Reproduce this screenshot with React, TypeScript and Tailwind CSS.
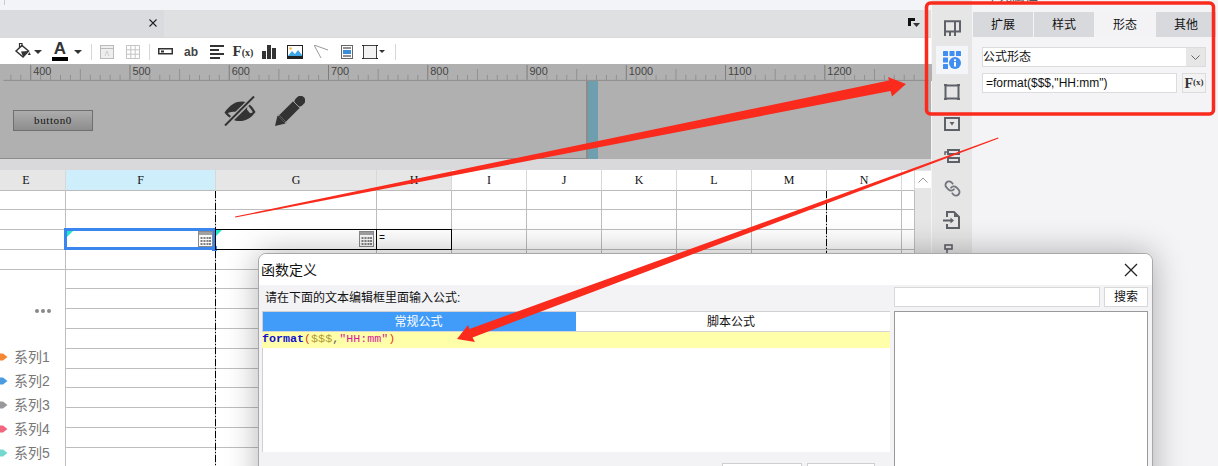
import type { ReactNode } from "react";
import { Link } from "lucide-react";

const columns = [
  { name: "E", width: "w-[66px]", head: "bg-[#e6e6e6] pr-[13px]" },
  { name: "F", width: "w-[150px]", head: "bg-[#cfeefb]" },
  { name: "G", width: "w-[161px]", head: "bg-[#e6e6e6]" },
  { name: "H", width: "w-[75px]", head: "bg-[#e6e6e6]" },
  { name: "I", width: "w-[75px]", head: "bg-white" },
  { name: "J", width: "w-[75px]", head: "bg-white" },
  { name: "K", width: "w-[75px]", head: "bg-white" },
  { name: "L", width: "w-[75px]", head: "bg-white" },
  { name: "M", width: "w-[75px]", head: "bg-white" },
  { name: "N", width: "w-[75px]", head: "bg-white" },
  { name: "", width: "flex-1", head: "bg-white" },
];

const rowHeights = [
  "h-[19px]", "h-[20px]", "h-[20px]", "h-[20px]", "h-[19px]", "h-[20px]", "h-[20px]",
  "h-[20px]", "h-[20px]", "h-[19px]", "h-[20px]", "h-[20px]", "h-[20px]", "h-[20px]",
];

const legend = [
  { name: "系列1", color: "#f58634" },
  { name: "系列2", color: "#4a9be0" },
  { name: "系列3", color: "#999999" },
  { name: "系列4", color: "#f2657f" },
  { name: "系列5", color: "#74d8cf" },
];

const rulerLabels = [400, 500, 600, 700, 800, 900, 1000, 1100, 1200];

function Calendar() {
  return (
    <svg width="15" height="16" viewBox="0 0 15 16" className="absolute right-[2px] bottom-[2px]">
      <rect x="0.5" y="0.5" width="14" height="15" fill="#fafafa" stroke="#8a8a8a" />
      <rect x="1" y="1" width="13" height="3" fill="#a0a0a0" />
      {[6, 9, 12].map((y) =>
        [2.5, 5.5, 8.5, 11].map((x) => <rect key={`${x}-${y}`} x={x} y={y} width="2" height="2" fill="#808080" />)
      )}
    </svg>
  );
}

function Corner({ className }: { className: string }) {
  return <div className={`absolute w-0 h-0 border-t-[6px] border-t-[#22e6c4] border-r-[6px] border-r-transparent ${className}`} />;
}

function Slot({ children }: { children: ReactNode }) {
  return <div className="w-[26px] h-[26px] flex items-center justify-center shrink-0">{children}</div>;
}

function Caret({ className }: { className: string }) {
  return <div className={`w-0 h-0 border-x-[4px] border-x-transparent border-t-[4px] border-t-[#333] ${className}`} />;
}

function Sep({ className }: { className: string }) {
  return <div className={`w-px h-[16px] bg-[#d8d8d8] shrink-0 ${className}`} />;
}

function Toolbar() {
  return (
    <div className="h-[26px] bg-white flex items-center pt-[2px]">
      <svg width="17" height="20" viewBox="0 0 17 20" className="ml-[14px] shrink-0">
        <path d="M2 9 L8 3.5 L14.5 9 L9 15 Z" fill="#fff" stroke="#333" strokeWidth="1.5" />
        <path d="M5.5 6 V1.5 H8 V5" fill="none" stroke="#333" strokeWidth="1.2" />
        <path d="M7 9.5 L14.5 9 L9 15 Z" fill="#333" />
        <path d="M15.3 10 L16.8 13 H13.8 Z" fill="#333" />
      </svg>
      <Caret className="ml-[3px] mt-[1px]" />
      <div className="ml-[10px] w-[16px] flex flex-col items-center shrink-0">
        <span className="text-[17px] leading-[14px] font-bold text-[#333]">A</span>
        <div className="w-[16px] h-[4px] bg-black mt-[1px]" />
      </div>
      <Caret className="ml-[6px] mt-[1px]" />
      <Sep className="ml-[9px]" />
      <div className="ml-[2px]" />
      <Slot>
        <svg width="14" height="14" viewBox="0 0 14 14">
          <rect x="0.5" y="0.5" width="13" height="13" fill="#eee" stroke="#bbb" />
          <path d="M0.5 3.5 H13.5" stroke="#bbb" />
          <path d="M7 6 L5 11 M7 6 L9 11" stroke="#ccc" />
        </svg>
      </Slot>
      <Slot>
        <svg width="14" height="14" viewBox="0 0 14 14">
          <path d="M0.5 0.5 H13.5 V13.5 H0.5 Z M0.5 4.8 H13.5 M0.5 9.2 H13.5 M4.8 0.5 V13.5 M9.2 0.5 V13.5" fill="none" stroke="#c4c4c4" />
        </svg>
      </Slot>
      <Sep className="ml-[3px]" />
      <div className="ml-[2px]" />
      <Slot>
        <svg width="15" height="7" viewBox="0 0 15 7">
          <rect x="0.75" y="0.75" width="13.5" height="5" fill="none" stroke="#333" strokeWidth="1.5" />
          <rect x="3" y="2.5" width="3" height="2" fill="#333" />
        </svg>
      </Slot>
      <Slot>
        <span className="text-[12px] font-bold text-[#444] leading-none mt-[1px]">ab</span>
      </Slot>
      <Slot>
        <svg width="14" height="14" viewBox="0 0 14 14">
          <path d="M0 1 H14 M0 5 H9 M0 9 H14 M0 13 H10" stroke="#333" strokeWidth="2" />
        </svg>
      </Slot>
      <Slot>
        <span className="font-['Liberation_Serif',serif] font-bold text-[#333] text-[15px] leading-none">
          F<span className="text-[10px]">(x)</span>
        </span>
      </Slot>
      <Slot>
        <svg width="14" height="14" viewBox="0 0 14 14">
          <path d="M0 6 H4 V14 H0 Z M5 0 H9 V14 H5 Z M10 3 H14 V14 H10 Z" fill="#333" />
        </svg>
      </Slot>
      <Slot>
        <svg width="16" height="14" viewBox="0 0 16 14">
          <rect x="0.5" y="0.5" width="15" height="13" fill="#fff" stroke="#222" />
          <rect x="0" y="11" width="16" height="3" fill="#222" />
          <path d="M1 11 L5 6 L8 9 L11 5 L15 10 V11 Z" fill="#3ca7e8" />
          <circle cx="3.5" cy="3.5" r="1.3" fill="#f5b942" />
        </svg>
      </Slot>
      <Slot>
        <svg width="14" height="13" viewBox="0 0 14 13">
          <path d="M0 0 L14 5 M0 0 L7 13" stroke="#999" fill="none" />
        </svg>
      </Slot>
      <Slot>
        <svg width="12" height="14" viewBox="0 0 12 14">
          <rect x="0.5" y="0.5" width="11" height="13" fill="#fff" stroke="#666" />
          <path d="M2 3 H10" stroke="#222" />
          <rect x="2" y="5" width="8" height="4" fill="#3a8ed8" />
          <path d="M2 11 H10" stroke="#222" />
        </svg>
      </Slot>
      <div className="w-[26px] h-[26px] flex items-center justify-center shrink-0 relative">
        <svg width="16" height="16" viewBox="0 0 16 16" className="-ml-[6px]">
          <rect x="1.5" y="1.5" width="13" height="13" fill="#f3f3f3" stroke="#444" />
          <path d="M0 1.5 H2 M14 1.5 H16 M0 14.5 H2 M14 14.5 H16" stroke="#222" />
        </svg>
        <div className="absolute right-[1px] top-[11px] w-0 h-0 border-x-[3px] border-x-transparent border-t-[3px] border-t-[#333]" />
      </div>
      <Sep className="ml-[9px]" />
    </div>
  );
}

function Ruler() {
  const ticks = Array.from({ length: 92 }, (_, i) => i * 10 + 7);
  return (
    <svg width="932" height="17" viewBox="0 0 932 17" className="block bg-[#b0b0b0] font-['Liberation_Sans',sans-serif]">
      {ticks.map((x) => {
        const major = (x - 27) % 100 === 0;
        const mid = (x - 27) % 50 === 0;
        return <line key={x} x1={x + 0.5} x2={x + 0.5} y1={major ? 1 : mid ? 5 : 11} y2="16" stroke={major ? "#7c7c7c" : "#909090"} />;
      })}
      {rulerLabels.map((n, i) => (
        <text key={n} x={i * 100 + 30} y="11" fontSize="11" fill="#444">
          {n}
        </text>
      ))}
      <line x1="0" x2="932" y1="16.5" y2="16.5" stroke="#8c8c8c" />
    </svg>
  );
}

function Canvas() {
  return (
    <div className="h-[79px] bg-[#b0b0b0] flex">
      <div className="w-[588px] border-r-2 border-b border-[#8c8c8c] flex items-start shrink-0">
        <div className="ml-[13px] mt-[29px] w-[80px] h-[21px] border border-[#6f6f6f] bg-gradient-to-b from-[#adadad] to-[#8d8d8d] flex items-center justify-center font-['Liberation_Serif',serif] text-[11px] tracking-[0.6px] text-[#111] shrink-0">
          button0
        </div>
        <svg width="32" height="30" viewBox="0 0 32 30" className="ml-[131px] mt-[15px] shrink-0">
          <path d="M0.5 16.5 C6 8.5 12 5.5 18 5.5 C24 5.5 28 10 31.5 16 C27 22.5 21 25.5 14 25 C8 24.5 4 21 0.5 16.5 Z" fill="#333" />
          <path d="M3.8 17 C6 19.5 8 21 10 21.5 L14.5 16 C10.5 15.5 6.5 16 3.8 17 Z" fill="#b0b0b0" />
          <path d="M23.5 9.5 C25.5 11 27.5 13.5 28.7 16 C27.8 17 26.7 18 25 16 L23 13.5 Z" fill="#b0b0b0" />
          <path d="M1 29.5 L30 1" stroke="#b0b0b0" strokeWidth="5" />
          <path d="M1 29.5 L30 0.5" stroke="#333" strokeWidth="2" />
        </svg>
        <svg width="30" height="30" viewBox="0 0 30 30" className="ml-[19px] mt-[15px] shrink-0">
          <path d="M0 30 L2.5 19.5 L10.5 27.5 Z" fill="#333" />
          <path d="M6.5 23.5 L21.5 8.5" stroke="#333" strokeWidth="9.5" />
          <path d="M24 6 L25.5 4.5" stroke="#333" strokeWidth="9.5" strokeLinecap="round" />
          <path d="M3.5 18.5 L11.5 26.5" stroke="#6a6a6a" strokeWidth="0.8" />
          <path d="M18.2 5.2 L24.8 11.8" stroke="#b0b0b0" strokeWidth="0.9" />
        </svg>
      </div>
      <div className="w-[10px] bg-[#6f9fae] shrink-0" />
      <div className="flex-1" />
    </div>
  );
}

function Sheet() {
  return (
    <div className="flex h-[296px]">
      <div className="w-[915px] relative overflow-hidden font-['Liberation_Serif',serif] text-[12px] text-[#111] shrink-0">
        <div className="flex h-[21px] bg-white">
          {columns.map((col) => (
            <div
              key={col.name}
              className={`${col.width} ${col.head} border-b border-b-[#bbbbbb] border-r border-r-[#d8d8d8] flex items-center justify-center`}
            >
              {col.name}
            </div>
          ))}
        </div>
        {rowHeights.map((height, row) => (
          <div key={row} className={`flex ${height} bg-white`}>
            {columns.map((col) => {
              const active = row === 2 && ["F", "G", "H"].includes(col.name);
              return (
                <div key={col.name} className={`${col.width} relative border-b border-r border-[#bdbdbd] ${active ? "z-10" : ""}`}>
                  {active && col.name !== "F" && <div className="absolute -top-px -left-px right-[-1px] bottom-[-1px] border border-black" />}
                  {active && col.name === "G" && <Corner className="left-0 top-0" />}
                  {active && col.name === "F" && <Corner className="left-[1px] top-[1px]" />}
                  {active && col.name !== "H" && <Calendar />}
                  {active && col.name === "H" && <span className="absolute left-[2px] top-0 leading-[18px] font-['Liberation_Mono',monospace] text-[10px]">=</span>}
                  {active && col.name === "F" && (
                    <>
                      <div className="absolute -left-[2px] -top-[2px] -right-[1px] -bottom-[1px] border-[3px] border-[#3a86ee] z-20" />
                      <div className="absolute -right-[2px] -bottom-[2px] w-[5px] h-[5px] bg-[#3a86ee] z-20" />
                    </>
                  )}
                </div>
              );
            })}
          </div>
        ))}
        {/* chart sitting over column E */}
        <div className="absolute left-0 top-[101px] bottom-0 w-[65px] bg-white font-['Liberation_Sans','Noto_Sans_CJK_SC',sans-serif] text-[#777] pt-[33px]">
          <div className="flex gap-[2px] pl-[35px] h-[14px] items-center">
            <div className="w-[4px] h-[4px] rounded-full bg-[#888]" />
            <div className="w-[4px] h-[4px] rounded-full bg-[#888]" />
            <div className="w-[4px] h-[4px] rounded-full bg-[#888]" />
          </div>
          <div className="flex flex-col mt-[27px]">
            {legend.map((item) => (
              <div key={item.name} className="h-[24px] flex items-center text-[14px]">
                <svg width="8" height="8" viewBox="0 0 8 8" className="shrink-0">
                  <path d="M0 0.5 H3 L7.5 4 L3 7.5 H0 Z" fill={item.color} />
                </svg>
                <span className="ml-[6px]">{item.name}</span>
              </div>
            ))}
          </div>
        </div>
        <svg width="1" height="296" className="absolute left-[215px] top-[21px] z-30">
          <line x1="0.5" x2="0.5" y1="0" y2="296" stroke="#000" strokeDasharray="7 2 1 2" />
        </svg>
        <svg width="1" height="62" className="absolute left-[826px] top-[21px] z-30">
          <line x1="0.5" x2="0.5" y1="0" y2="62" stroke="#000" strokeDasharray="7 2 1 2" />
        </svg>
      </div>
      <div className="w-[16px] bg-[#e6e6e6] shrink-0">
        <div className="h-[17px] mt-px bg-white flex items-center justify-center">
          <svg width="10" height="6" viewBox="0 0 10 6">
            <path d="M0.5 5.5 L5 1 L9.5 5.5" fill="none" stroke="#999" />
          </svg>
        </div>
      </div>
    </div>
  );
}

function Rail() {
  const stroke = "#5f6169";
  return (
    <div className="w-[40px] ml-px h-full bg-[#e6e6e6] flex flex-col items-center pt-[12px] shrink-0">
      <div className="h-[32px] flex items-center justify-center">
        <svg width="17" height="17" viewBox="0 0 17 17">
          <path d="M1 16 V1.2 H16 V11.5 H1 M11 1.2 V16 M6 11.5 V16" fill="none" stroke={stroke} strokeWidth="2" />
        </svg>
      </div>
      <div className="h-[28px] w-[32px] my-[2px] bg-[#f4f5f8] flex items-center justify-center">
        <svg width="18" height="18" viewBox="0 0 18 18">
          <rect x="0" y="0" width="5" height="5" rx="0.6" fill="#3f8ef0" />
          <rect x="6.5" y="0" width="5" height="5" rx="0.6" fill="#3f8ef0" />
          <rect x="13" y="0" width="5" height="5" rx="0.6" fill="#3f8ef0" />
          <rect x="0" y="6.5" width="5" height="5" rx="0.6" fill="#3f8ef0" />
          <rect x="0" y="13" width="5" height="5" rx="0.6" fill="#3f8ef0" />
          <circle cx="12" cy="12" r="6" fill="#3f8ef0" />
          <rect x="11" y="11" width="2" height="4.5" fill="#fff" />
          <rect x="11" y="8.3" width="2" height="1.8" fill="#fff" />
        </svg>
      </div>
      <div className="h-[32px] flex items-center justify-center">
        <svg width="16" height="16" viewBox="0 0 16 16">
          <rect x="1.5" y="1.5" width="13" height="13" fill="none" stroke={stroke} strokeWidth="2" />
          <path d="M0 1 H3 M13 1 H16 M0 15 H3 M13 15 H16" stroke={stroke} strokeWidth="2" />
        </svg>
      </div>
      <div className="h-[32px] flex items-center justify-center">
        <svg width="16" height="14" viewBox="0 0 16 14">
          <rect x="1" y="1" width="14" height="12" fill="none" stroke={stroke} strokeWidth="2" />
          <path d="M5.5 5 H10.5 L8 8.5 Z" fill={stroke} />
        </svg>
      </div>
      <div className="h-[32px] flex items-center justify-center">
        <svg width="16" height="14" viewBox="0 0 16 14">
          <rect x="4" y="1" width="11" height="4" fill="none" stroke={stroke} strokeWidth="2" />
          <rect x="4" y="9" width="11" height="4" fill="none" stroke={stroke} strokeWidth="2" />
          <path d="M4 3 H1 V6" fill="none" stroke={stroke} strokeWidth="1.5" />
        </svg>
      </div>
      <div className="h-[32px] flex items-center justify-center">
        <Link size={17} strokeWidth={2.6} color="#74767e" className="-scale-x-100" />
      </div>
      <div className="h-[32px] flex items-center justify-center">
        <svg width="18" height="18" viewBox="0 0 18 18">
          <path d="M4 6 V1 H11 L16 6 V17 H4 V13" fill="none" stroke={stroke} strokeWidth="2" />
          <path d="M11 1 V6 H16 Z" fill={stroke} />
          <path d="M0 9.5 H9" stroke={stroke} strokeWidth="2" />
          <path d="M7.5 6.5 L11 9.5 L7.5 12.5 Z" fill={stroke} />
        </svg>
      </div>
      <div className="h-[32px] flex items-center justify-center">
        <svg width="16" height="16" viewBox="0 0 16 16">
          <rect x="1" y="1" width="7" height="4" fill="none" stroke={stroke} strokeWidth="1.6" />
          <rect x="8" y="10" width="7" height="4" fill="none" stroke={stroke} strokeWidth="1.6" />
          <path d="M3 5 V12 H8" fill="none" stroke={stroke} strokeWidth="1.5" />
        </svg>
      </div>
    </div>
  );
}

function Panel() {
  const tabs = ["扩展", "样式", "形态", "其他"];
  return (
    <div className="flex-1 bg-[#f4f4f7] text-[12px] text-[#111]">
      <div className="h-[12px] overflow-hidden pl-[14px]">
        <div className="-mt-[12px] text-[13px] leading-[16px] text-[#555]">单元属性</div>
      </div>
      <div className="flex h-[25px] gap-[1px] pl-px">
        {tabs.map((tab) => (
          <div
            key={tab}
            className={`w-[60px] flex items-center justify-center ${tab === "形态" ? "bg-[#f3f3f6]" : "bg-[#d8d9dd]"}`}
          >
            {tab}
          </div>
        ))}
      </div>
      <div className="ml-[10px] w-[224px] mt-[10px] h-[20px] flex border border-[#dcdcdc] bg-white">
        <div className="flex-1 leading-[18px]">公式形态</div>
        <div className="w-[19px] bg-[#e6e6e6] flex items-center justify-center">
          <svg width="9" height="5" viewBox="0 0 9 5">
            <path d="M0.5 0.5 L4.5 4.5 L8.5 0.5" fill="none" stroke="#666" />
          </svg>
        </div>
      </div>
      <div className="ml-[10px] w-[224px] mt-[6px] flex gap-[5px]">
        <div className="w-[195px] h-[20px] border border-[#dcdcdc] bg-white pl-[3px] leading-[18px]">=format($$$,"HH:mm")</div>
        <div className="w-[24px] h-[20px] border border-[#dcdcdc] bg-[#f3f3f3] flex items-center justify-center font-['Liberation_Serif',serif] font-bold text-[14px] text-[#333]">
          F<span className="text-[9px]">(x)</span>
        </div>
      </div>
    </div>
  );
}

function Dialog() {
  return (
    <div className="absolute left-[258px] top-[253px] w-[895px] h-[260px] rounded-t-[8px] rounded-b-[8px] border border-[#a8a8a8] bg-[#f3f3f6] shadow-[0_0_32px_rgba(0,0,0,0.3)] overflow-hidden z-40 text-[12px] text-[#111]">
      <div className="h-[31px] bg-white flex items-center justify-between">
        <span className="ml-[2px] text-[14px] mt-[2px]">函数定义</span>
        <svg width="14" height="14" viewBox="0 0 14 14" className="mr-[14px]">
          <path d="M1 1 L13 13 M13 1 L1 13" stroke="#222" strokeWidth="1.3" />
        </svg>
      </div>
      <div className="flex pl-[3px] gap-[4px]">
        <div className="w-[628px] shrink-0">
          <div className="h-[26px] leading-[26px] pl-[3px]">请在下面的文本编辑框里面输入公式:</div>
          <div className="h-[141px] bg-white border-t border-l border-[#cfcfd4]">
            <div className="flex h-[20px] border-b border-[#d5d5d5]">
              <div className="w-[313px] bg-[#419bf9] text-white flex items-center justify-center pr-[2px]">常规公式</div>
              <div className="flex-1 flex items-center justify-center pr-[4px]">脚本公式</div>
            </div>
            <div className="h-[16px] -ml-px bg-[#ffffaa] font-['Liberation_Mono',monospace] text-[11.7px] leading-[14px] whitespace-pre">
              <span className="text-[#1010d0] font-bold">format</span>
              <span className="text-[#e0401a]">(</span>
              <span className="text-[#b09a30]">$$$</span>
              <span className="text-[#555]">,</span>
              <span className="text-[#d81b9a]">"HH:mm"</span>
              <span className="text-[#e0401a]">)</span>
            </div>
          </div>
          <div className="flex justify-end mt-[11px] gap-[5px] pr-[15px]">
            <div className="w-[80px] h-[24px] bg-white border border-[#cfcfcf]" />
            <div className="w-[68px] h-[24px] bg-white border border-[#cfcfcf]" />
          </div>
        </div>
        <div className="w-[254px] shrink-0 pt-[2px]">
          <div className="flex gap-[4px] h-[20px]">
            <div className="w-[206px] bg-white border border-[#d8d8d8]" />
            <div className="w-[44px] bg-white border border-[#d8d8d8] flex items-center justify-center">搜索</div>
          </div>
          <div className="mt-[4px] h-[200px] bg-white border border-[#999]" />
        </div>
      </div>
    </div>
  );
}

export default function App() {
  return (
    <div className="relative w-[1218px] h-[466px] overflow-hidden flex bg-[#f4f4f7] font-['Liberation_Sans','Noto_Sans_CJK_SC',sans-serif]">
      <div className="w-[931px] shrink-0 bg-[#d9d9db] flex flex-col">
        <div className="h-[10px] bg-[#f3f4f8] pl-[4px]">
          <div className="w-px h-[5px] bg-[#ccc]" />
        </div>
        <div className="h-[27px] bg-[#dfe0e2] flex items-center mb-px">
          <div className="w-[164px] h-full bg-[#d9dbdf] flex items-center justify-end pr-[7px] shrink-0">
            <svg width="8" height="8" viewBox="0 0 8 8">
              <path d="M0.5 0.5 L7.5 7.5 M7.5 0.5 L0.5 7.5" stroke="#222" strokeWidth="1.1" />
            </svg>
          </div>
          <svg width="12" height="10" viewBox="0 0 12 10" className="ml-auto mr-[11px]">
            <path d="M0 0 H7 V3 H3 V8 H0 Z" fill="#111" />
            <path d="M5 5 H12 L8.5 9 Z" fill="#333" />
          </svg>
        </div>
        <Toolbar />
        <Ruler />
        <Canvas />
        <div className="h-[11px] shrink-0" />
        <Sheet />
      </div>
      <Rail />
      <Panel />
      <Dialog />
      {/* red annotations drawn on top of the screenshot */}
      <svg width="1218" height="466" viewBox="0 0 1218 466" className="absolute left-0 top-0 z-50 pointer-events-none">
        <rect x="926.5" y="3" width="287" height="111" rx="4" fill="none" stroke="#fa2a1c" strokeWidth="3.5" />
        <path d="M235 216.5 L889 80.5 L888 77 L906 84 L892 96.5 L890.5 91 L235.3 217.5 Z" fill="#fa2a1c" />
        <path d="M998 137.5 L469.5 329 L468 325 L457 339 L475 342 L472.5 337.5 L998.5 138.5 Z" fill="#fa2a1c" />
      </svg>
    </div>
  );
}
